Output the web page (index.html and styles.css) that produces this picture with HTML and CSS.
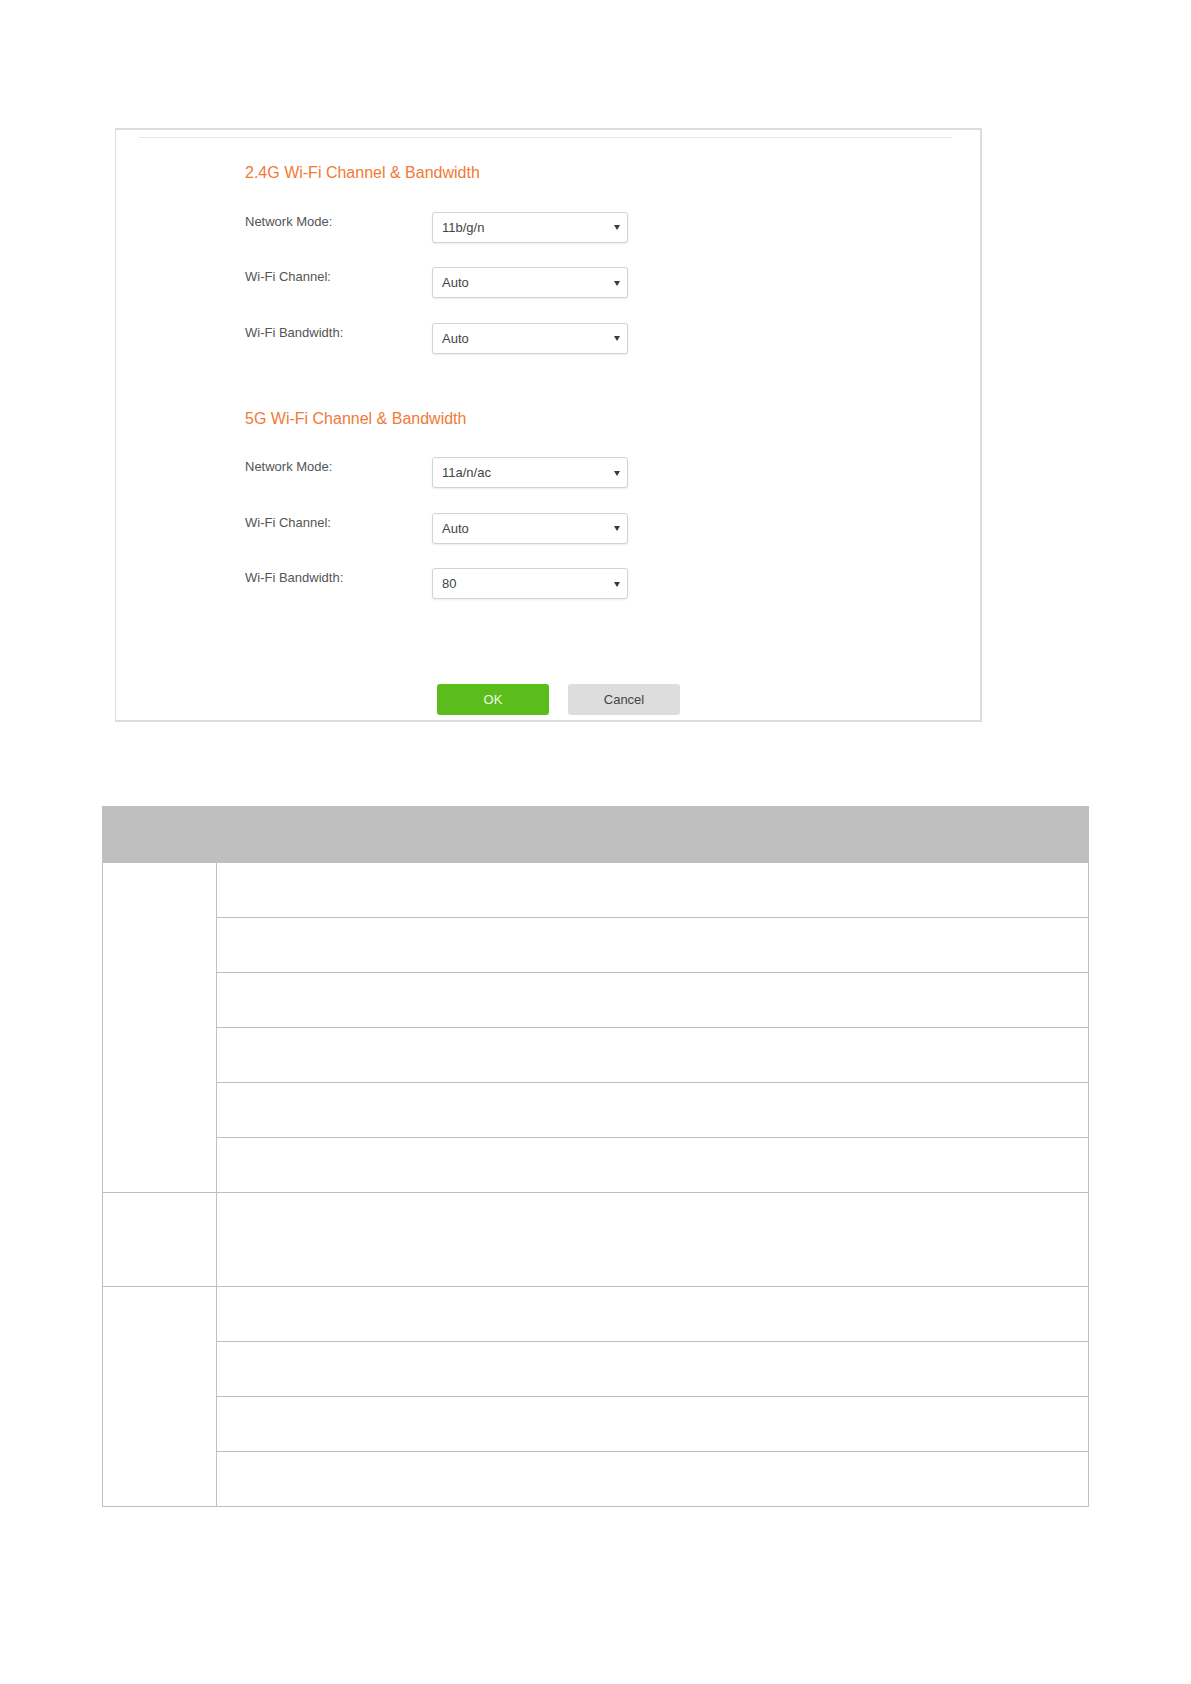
FILE: index.html
```html
<!DOCTYPE html>
<html lang="en">
<head>
<meta charset="utf-8">
<title>Wi-Fi Channel &amp; Bandwidth</title>
<link rel="stylesheet" href="styles.css">
</head>
<body>
<div class="page">
  <div class="panel">
    <div class="divider"></div>
    <div class="content">
      <h2 class="heading">2.4G Wi-Fi Channel &amp; Bandwidth</h2>
      <div class="form">
        <div class="row"><span class="label">Network Mode:</span><div class="select"><span>11b/g/n</span><span class="arrow"></span></div></div>
        <div class="row"><span class="label">Wi-Fi Channel:</span><div class="select"><span>Auto</span><span class="arrow"></span></div></div>
        <div class="row"><span class="label">Wi-Fi Bandwidth:</span><div class="select"><span>Auto</span><span class="arrow"></span></div></div>
      </div>
      <h2 class="heading heading-5g">5G Wi-Fi Channel &amp; Bandwidth</h2>
      <div class="form">
        <div class="row"><span class="label">Network Mode:</span><div class="select"><span>11a/n/ac</span><span class="arrow"></span></div></div>
        <div class="row"><span class="label">Wi-Fi Channel:</span><div class="select"><span>Auto</span><span class="arrow"></span></div></div>
        <div class="row"><span class="label">Wi-Fi Bandwidth:</span><div class="select"><span>80</span><span class="arrow"></span></div></div>
      </div>
      <div class="buttons">
        <button class="btn btn-ok">OK</button>
        <button class="btn btn-cancel">Cancel</button>
      </div>
    </div>
  </div>

  <table class="grid">
    <colgroup><col class="c1"><col class="c2"></colgroup>
    <tr class="head"><td colspan="2"></td></tr>
    <tr class="r"><td rowspan="6"></td><td></td></tr>
    <tr class="r"><td></td></tr>
    <tr class="r"><td></td></tr>
    <tr class="r"><td></td></tr>
    <tr class="r"><td></td></tr>
    <tr class="r"><td></td></tr>
    <tr class="tall"><td></td><td></td></tr>
    <tr class="r"><td rowspan="4"></td><td></td></tr>
    <tr class="r"><td></td></tr>
    <tr class="r"><td></td></tr>
    <tr class="r"><td></td></tr>
  </table>
</div>
</body>
</html>
```

FILE: styles.css
```css
html, body {
  margin: 0;
  padding: 0;
  background: #ffffff;
}

body {
  font-family: "Liberation Sans", Arial, sans-serif;
}

.page {
  padding-top: 128px;
}

.panel {
  box-sizing: border-box;
  margin-left: 115px;
  width: 867px;
  height: 594px;
  border: 2px solid #dcdcdc;
  border-left-width: 1px;
}

.divider {
  margin: 7px 0 0 23px;
  width: 813px;
  height: 1px;
  background: #e6e6e6;
}

.content {
  padding-left: 129px;
}

.heading {
  margin: 25px 0 0 0;
  font-size: 16px;
  line-height: 20px;
  font-weight: normal;
  color: #f07a36;
}

.heading-5g {
  margin-top: 55px;
}

.form {
  margin-top: 28.5px;
  display: flex;
  flex-direction: column;
  gap: 24.5px;
}

.row {
  display: flex;
  align-items: flex-start;
  height: 31px;
}

.label {
  width: 187px;
  margin-top: 2px;
  font-size: 13px;
  line-height: 16px;
  color: #555555;
}

.select {
  box-sizing: border-box;
  width: 196px;
  height: 31px;
  border: 1px solid #d3d3d3;
  border-radius: 3px;
  box-shadow: 0 1px 2px rgba(0, 0, 0, 0.08);
  background: #ffffff;
  display: flex;
  align-items: center;
  justify-content: space-between;
  padding: 0 7px 0 9px;
  font-size: 13px;
  line-height: 29px;
  color: #444444;
}

.arrow {
  width: 0;
  height: 0;
  border-left: 3px solid transparent;
  border-right: 3px solid transparent;
  border-top: 5px solid #3a3a3a;
  margin-top: 1px;
}

.buttons {
  margin: 84.5px 0 0 192px;
  display: flex;
  gap: 19px;
}

.btn {
  box-sizing: border-box;
  width: 112px;
  height: 31px;
  border: none;
  border-radius: 3px;
  font-family: "Liberation Sans", Arial, sans-serif;
  font-size: 13px;
  padding: 0;
}

.btn-ok {
  background: #5abd1c;
  color: #eef9e6;
}

.btn-cancel {
  background: #dddddd;
  color: #444444;
}

.grid {
  margin: 84px 0 0 102px;
  width: 987px;
  border-collapse: collapse;
  table-layout: fixed;
}

.grid .c1 {
  width: 114px;
}

.grid td {
  border: 1px solid #bfbfbf;
  padding: 0;
}

.grid .head td {
  background: #bfbfbf;
}

.grid .head {
  height: 56px;
}

.grid .r {
  height: 55px;
}

.grid .tall {
  height: 94px;
}
```
